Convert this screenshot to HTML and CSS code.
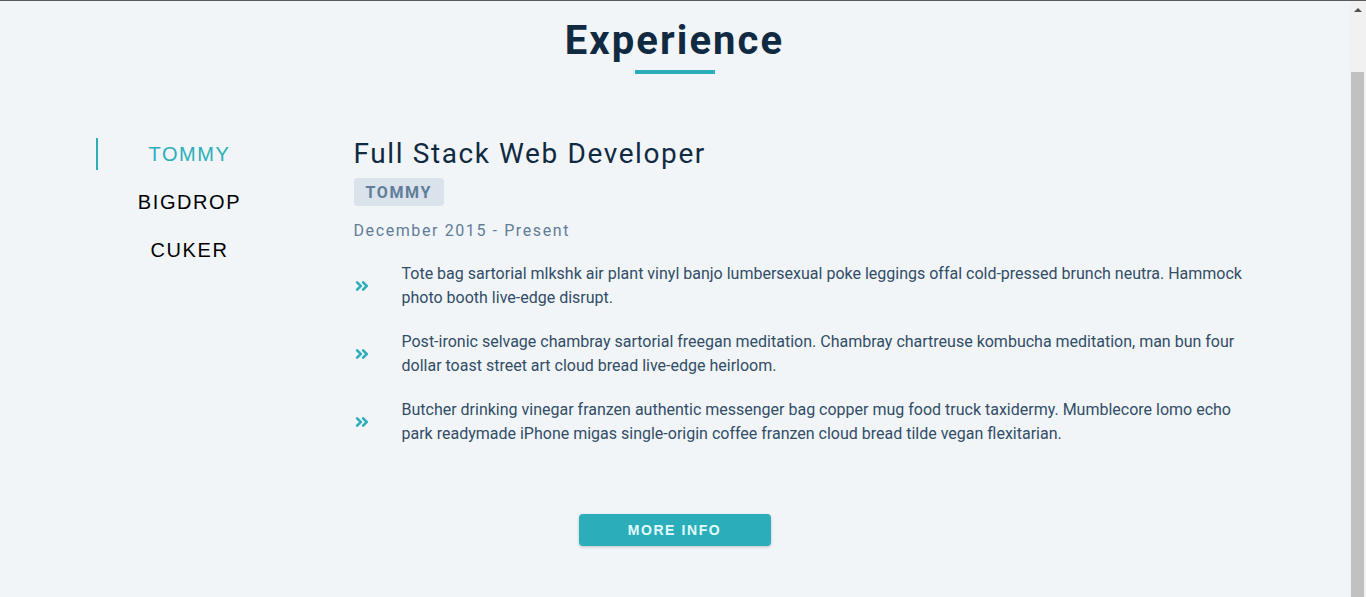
FILE: index.html
```html
<!DOCTYPE html>
<html lang="en">
<head>
<meta charset="utf-8">
<title>Experience</title>
<link rel="stylesheet" href="styles.css">
</head>
<body>
<div class="topline"></div>
<div class="window">
  <main class="page">
    <section class="section">
      <div class="title">
        <h2>Experience</h2>
        <div class="underline"></div>
      </div>
      <div class="jobs-center">
        <div class="btn-container">
          <button class="job-btn active-btn">Tommy</button>
          <button class="job-btn">Bigdrop</button>
          <button class="job-btn">Cuker</button>
        </div>
        <article class="job-info">
          <h3>Full Stack Web Developer</h3>
          <h4>Tommy</h4>
          <p class="job-date">December 2015 - Present</p>
          <div class="job-desc">
            <svg class="job-icon" viewBox="0 0 448 512" aria-hidden="true"><path d="M224.3 273l-136 136c-9.4 9.4-24.6 9.4-33.9 0l-22.6-22.6c-9.4-9.4-9.4-24.6 0-33.9l96.4-96.4-96.4-96.4c-9.4-9.4-9.4-24.6 0-33.9L54.3 103c9.4-9.4 24.6-9.4 33.9 0l136 136c9.5 9.4 9.5 24.6.1 34zm192-34l-136-136c-9.4-9.4-24.6-9.4-33.9 0l-22.6 22.6c-9.4 9.4-9.4 24.6 0 33.9l96.4 96.4-96.4 96.4c-9.4 9.4-9.4 24.6 0 33.9l22.6 22.6c9.4 9.4 24.6 9.4 33.9 0l136-136c9.4-9.2 9.4-24.4 0-33.8z"/></svg>
            <p>Tote bag sartorial mlkshk air plant vinyl banjo lumbersexual poke leggings offal cold-pressed brunch neutra. Hammock photo booth live-edge disrupt.</p>
          </div>
          <div class="job-desc">
            <svg class="job-icon" viewBox="0 0 448 512" aria-hidden="true"><path d="M224.3 273l-136 136c-9.4 9.4-24.6 9.4-33.9 0l-22.6-22.6c-9.4-9.4-9.4-24.6 0-33.9l96.4-96.4-96.4-96.4c-9.4-9.4-9.4-24.6 0-33.9L54.3 103c9.4-9.4 24.6-9.4 33.9 0l136 136c9.5 9.4 9.5 24.6.1 34zm192-34l-136-136c-9.4-9.4-24.6-9.4-33.9 0l-22.6 22.6c-9.4 9.4-9.4 24.6 0 33.9l96.4 96.4-96.4 96.4c-9.4 9.4-9.4 24.6 0 33.9l22.6 22.6c9.4 9.4 24.6 9.4 33.9 0l136-136c9.4-9.2 9.4-24.4 0-33.8z"/></svg>
            <p>Post-ironic selvage chambray sartorial freegan meditation. Chambray chartreuse kombucha meditation, man bun four dollar toast street art cloud bread live-edge heirloom.</p>
          </div>
          <div class="job-desc">
            <svg class="job-icon" viewBox="0 0 448 512" aria-hidden="true"><path d="M224.3 273l-136 136c-9.4 9.4-24.6 9.4-33.9 0l-22.6-22.6c-9.4-9.4-9.4-24.6 0-33.9l96.4-96.4-96.4-96.4c-9.4-9.4-9.4-24.6 0-33.9L54.3 103c9.4-9.4 24.6-9.4 33.9 0l136 136c9.5 9.4 9.5 24.6.1 34zm192-34l-136-136c-9.4-9.4-24.6-9.4-33.9 0l-22.6 22.6c-9.4 9.4-9.4 24.6 0 33.9l96.4 96.4-96.4 96.4c-9.4 9.4-9.4 24.6 0 33.9l22.6 22.6c9.4 9.4 24.6 9.4 33.9 0l136-136c9.4-9.2 9.4-24.4 0-33.8z"/></svg>
            <p>Butcher drinking vinegar franzen authentic messenger bag copper mug food truck taxidermy. Mumblecore lomo echo park readymade iPhone migas single-origin coffee franzen cloud bread tilde vegan flexitarian.</p>
          </div>
        </article>
      </div>
      <button class="btn more-btn">more info</button>
    </section>
  </main>
  <div class="scrollbar">
    <div class="scroll-arrow"></div>
    <div class="scroll-thumb"></div>
  </div>
</div>
</body>
</html>
```
FILE: styles.css
```css
* { box-sizing: border-box; margin: 0; padding: 0; }

html, body { height: 597px; overflow: hidden; }

body {
  font-family: "Segoe UI", Roboto, "Noto Sans", sans-serif;
  background: #f1f5f8;
  color: #102a42;
  font-size: 16px;
  line-height: 1.5;
}

.topline { height: 1px; background: #5a5a5a; }

.window { display: flex; height: 596px; }

.page { flex: 1; min-width: 0; }

.scrollbar {
  width: 17px;
  background: #f1f1f1;
  display: flex;
  flex-direction: column;
  align-items: center;
}
.scroll-arrow {
  margin-top: 7px;
  width: 0; height: 0;
  border-left: 4px solid transparent;
  border-right: 4px solid transparent;
  border-bottom: 4px solid #505050;
}
.scroll-thumb {
  margin-top: 60px;
  width: 13px;
  flex: 1;
  background: #c1c1c1;
}

.section {
  width: 1170px;
  margin: 0 auto;
  padding-top: 17px;
}

h2, h3, h4 { letter-spacing: 0.1rem; line-height: 1; margin-bottom: 12px; }

.title { text-align: center; margin-bottom: 64px; }
.title h2 {
  font-size: 40px;
  font-weight: 700;
  color: #102a42;
  letter-spacing: 0.13rem;
  padding-top: 3px;
  margin-bottom: 9px;
}
.underline { width: 80px; height: 4px; background: #2caeba; margin: 0 auto; }

.jobs-center {
  display: grid;
  grid-template-columns: 200px 1fr;
  column-gap: 64px;
  align-items: start;
}

.btn-container { display: flex; flex-direction: column; }

.job-btn {
  font-family: "Liberation Sans", Arial, sans-serif;
  background: transparent;
  border: 2px solid transparent;
  text-transform: uppercase;
  font-size: 20px;
  letter-spacing: 0.1rem;
  margin: 0 8px 16px;
  padding: 4px 0;
  line-height: 1;
  color: #000;
  cursor: pointer;
}
.active-btn { color: #2caeba; box-shadow: -2px 0 #2caeba; }

.job-info h3 {
  font-size: 28px;
  font-weight: 400;
  color: #102a42;
  padding-top: 2px;
  margin-bottom: 10px;
}
.job-info h4 {
  display: inline-block;
  font-size: 16px;
  font-weight: 700;
  text-transform: uppercase;
  color: #617d98;
  background: #dae2ec;
  padding: 7px 12px 5px;
  border-radius: 4px;
}

.job-date {
  letter-spacing: 0.1rem;
  color: #617d98;
  padding-top: 1px;
  margin-bottom: 19px;
}

.job-desc {
  display: grid;
  grid-template-columns: auto 1fr;
  column-gap: 32px;
  align-items: center;
  margin-bottom: 20px;
}
.job-desc p { color: #324d67; }
.job-icon { width: 16px; height: 16px; fill: #2caeba; display: block; }

.btn {
  font-family: "Liberation Sans", Arial, sans-serif;
  text-transform: uppercase;
  background: #2caeba;
  color: #e0fcff;
  padding: 6px 12px;
  letter-spacing: 0.1rem;
  font-weight: 700;
  font-size: 14px;
  line-height: 16px;
  border: 2px solid transparent;
  border-radius: 4px;
  box-shadow: 0 1px 3px rgba(0, 0, 0, 0.2);
  cursor: pointer;
}
.more-btn { display: block; width: 192px; margin: 48px auto 0; text-align: center; }
```
